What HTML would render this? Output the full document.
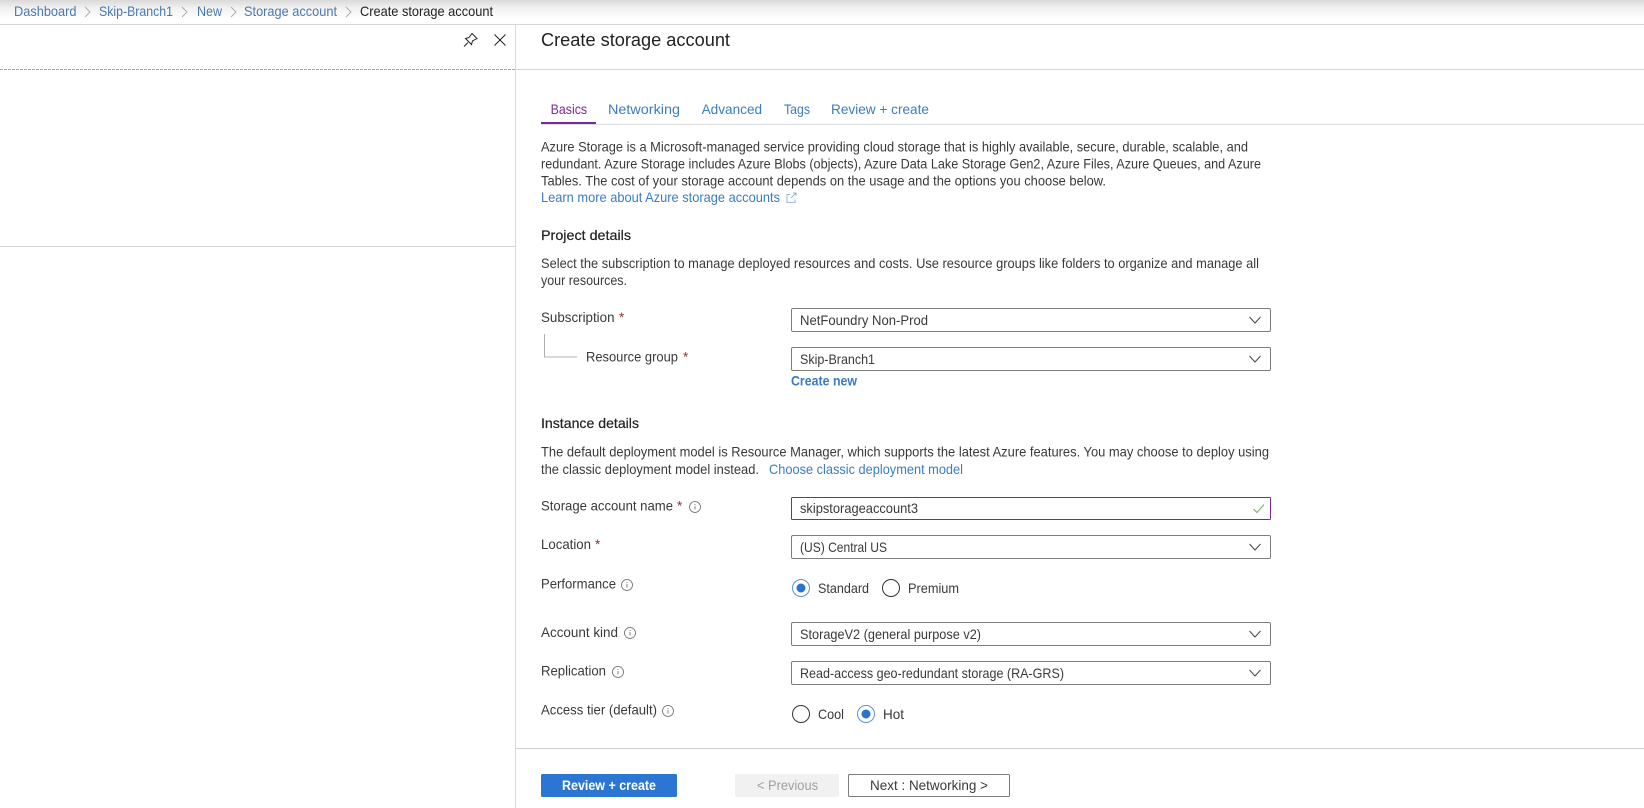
<!DOCTYPE html>
<html>
<head>
<meta charset="utf-8">
<style>
html,body{margin:0;padding:0;background:#fff;width:1644px;height:808px;overflow:hidden}
svg{display:block;filter:blur(.3px)}
text{font-family:"Liberation Sans",sans-serif;font-size:13.6px;fill:#3a3a3a}
.l{fill:#3b7cc2}
.b{fill:#4a78ae}
.s{fill:#8c2f2f}
.box{fill:#fff;stroke:#7d7d7d;stroke-width:1}
.ch{fill:none;stroke:#444;stroke-width:1}
.bc{fill:none;stroke:#aaa;stroke-width:.9}
.i{fill:none;stroke:#666;stroke-width:.8}
</style>
</head>
<body>
<svg width="1644" height="808" viewBox="0 0 1644 808" xmlns="http://www.w3.org/2000/svg">
<defs>
<linearGradient id="g" x1="0" y1="0" x2="0" y2="1"><stop offset="0" stop-color="#d9d9d9"/><stop offset=".35" stop-color="#f2f2f2"/><stop offset=".8" stop-color="#ffffff"/></linearGradient>
</defs>
<rect width="1644" height="808" fill="#fff"/>
<rect width="1644" height="24" fill="url(#g)"/>
<rect y="24" width="1644" height="1" fill="#d4d4d4"/>

<text class="b" x="14" y="16" textLength="62.5" lengthAdjust="spacingAndGlyphs">Dashboard</text>
<path class="bc" d="M85 7l5 5-5 5"/>
<text class="b" x="99" y="16" textLength="74" lengthAdjust="spacingAndGlyphs">Skip-Branch1</text>
<path class="bc" d="M182 7l5 5-5 5"/>
<text class="b" x="197" y="16" textLength="25" lengthAdjust="spacingAndGlyphs">New</text>
<path class="bc" d="M231 7l5 5-5 5"/>
<text class="b" x="244" y="16" textLength="93" lengthAdjust="spacingAndGlyphs">Storage account</text>
<path class="bc" d="M346 7l5 5-5 5"/>
<text x="360" y="16" textLength="133" lengthAdjust="spacingAndGlyphs" style="fill:#222">Create storage account</text>

<rect x="515" y="25" width="1" height="783" fill="#dadada"/>
<path d="M0 69.5H515" stroke="#6dbad6" stroke-width="1" stroke-dasharray="3 1"/>
<rect x="516" y="69" width="1128" height="1" fill="#d4d4d4"/>
<rect x="0" y="246" width="515" height="1" fill="#d4d4d4"/>
<path d="M464 46.5l4-4M472 33.5l5 5-4.5 2.5-1 3.5-6-6 3.5-1z" fill="none" stroke="#222" stroke-width="1"/>
<path d="M494.5 34.5l11 11M505.5 34.5l-11 11" fill="none" stroke="#222" stroke-width="1"/>

<text x="541" y="46" style="font-size:18px;fill:#222" textLength="189" lengthAdjust="spacingAndGlyphs">Create storage account</text>

<text x="550.6" y="114" style="fill:#7a2a96" textLength="36.5" lengthAdjust="spacingAndGlyphs">Basics</text>
<text class="l" x="608" y="114" textLength="72" lengthAdjust="spacingAndGlyphs">Networking</text>
<text class="l" x="701.6" y="114" textLength="60.5" lengthAdjust="spacingAndGlyphs">Advanced</text>
<text class="l" x="784" y="114" textLength="26" lengthAdjust="spacingAndGlyphs">Tags</text>
<text class="l" x="831" y="114" textLength="98" lengthAdjust="spacingAndGlyphs">Review + create</text>
<rect x="541" y="124" width="1103" height="1" fill="#dcdcdc"/>
<rect x="541" y="122" width="55" height="2" fill="#7a2a96"/>

<text x="541" y="151.5" textLength="707" lengthAdjust="spacingAndGlyphs">Azure Storage is a Microsoft-managed service providing cloud storage that is highly available, secure, durable, scalable, and</text>
<text x="541" y="168.5" textLength="720" lengthAdjust="spacingAndGlyphs">redundant. Azure Storage includes Azure Blobs (objects), Azure Data Lake Storage Gen2, Azure Files, Azure Queues, and Azure</text>
<text x="541" y="185.5" textLength="565" lengthAdjust="spacingAndGlyphs">Tables. The cost of your storage account depends on the usage and the options you choose below.</text>
<text class="l" x="541" y="202" textLength="239" lengthAdjust="spacingAndGlyphs">Learn more about Azure storage accounts</text>
<path d="M790 194.5h-3v8h8v-3M791 198l5-5M793 193h3v3" fill="none" stroke="#7ba5d6" stroke-width=".8"/>

<text x="541" y="240" style="fill:#222" stroke="#222" stroke-width=".2" textLength="90" lengthAdjust="spacingAndGlyphs">Project details</text>
<text x="541" y="268" textLength="718" lengthAdjust="spacingAndGlyphs">Select the subscription to manage deployed resources and costs. Use resource groups like folders to organize and manage all</text>
<text x="541" y="285" textLength="86" lengthAdjust="spacingAndGlyphs">your resources.</text>

<text x="541" y="322" textLength="73.5" lengthAdjust="spacingAndGlyphs">Subscription</text>
<text class="s" x="619" y="322">*</text>
<path d="M544.5 334V357H577" fill="none" stroke="#b0b0b0" stroke-width="1"/>
<text x="586" y="361.5" textLength="92" lengthAdjust="spacingAndGlyphs">Resource group</text>
<text class="s" x="683" y="361.5">*</text>

<rect class="box" x="791.5" y="308.5" width="479" height="23" rx="1.5"/>
<text x="800" y="325" textLength="128" lengthAdjust="spacingAndGlyphs">NetFoundry Non-Prod</text>
<path class="ch" d="M1249.5 317l5.5 6 5.5-6"/>

<rect class="box" x="791.5" y="347.5" width="479" height="23" rx="1.5"/>
<text x="800" y="364" textLength="75" lengthAdjust="spacingAndGlyphs">Skip-Branch1</text>
<path class="ch" d="M1249.5 356l5.5 6 5.5-6"/>
<text class="l" x="791" y="385.5" style="font-weight:700" textLength="66" lengthAdjust="spacingAndGlyphs">Create new</text>

<text x="541" y="428" stroke="#222" stroke-width=".2" style="fill:#222" textLength="98" lengthAdjust="spacingAndGlyphs">Instance details</text>
<text x="541" y="456.5" textLength="728" lengthAdjust="spacingAndGlyphs">The default deployment model is Resource Manager, which supports the latest Azure features. You may choose to deploy using</text>
<text x="541" y="474" textLength="218" lengthAdjust="spacingAndGlyphs">the classic deployment model instead.</text>
<text class="l" x="769" y="474" textLength="194" lengthAdjust="spacingAndGlyphs">Choose classic deployment model</text>

<text x="541" y="510.5" textLength="132" lengthAdjust="spacingAndGlyphs">Storage account name</text>
<text class="s" x="677" y="510.5">*</text>
<circle class="i" cx="695" cy="507" r="5.5"/><path class="i" d="M695 506v3.5M695 504v1"/>
<rect x="791.5" y="497.5" width="479" height="22" rx="1" fill="#fff" stroke="#7a2a96" stroke-width="1"/>
<text x="800" y="513" textLength="118" lengthAdjust="spacingAndGlyphs">skipstorageaccount3</text>
<path d="M1253.5 509l3.5 3.5 7-8" fill="none" stroke="#74ab58" stroke-width="1"/>

<text x="541" y="549" textLength="50" lengthAdjust="spacingAndGlyphs">Location</text>
<text class="s" x="595" y="549">*</text>
<rect class="box" x="791.5" y="535.5" width="479" height="23" rx="1.5"/>
<text x="800" y="552" textLength="87" lengthAdjust="spacingAndGlyphs">(US) Central US</text>
<path class="ch" d="M1249.5 544l5.5 6 5.5-6"/>

<text x="541" y="588.5" textLength="75" lengthAdjust="spacingAndGlyphs">Performance</text>
<circle class="i" cx="627" cy="585" r="5.5"/><path class="i" d="M627 584v3.5M627 582v1"/>
<circle cx="801" cy="588" r="8.5" fill="#fff" stroke="#5b93d3" stroke-width="1"/>
<circle cx="801" cy="588" r="4.5" fill="#2a74cc"/>
<text x="818" y="593" textLength="51" lengthAdjust="spacingAndGlyphs">Standard</text>
<circle cx="891" cy="588" r="8.5" fill="#fff" stroke="#333" stroke-width="1"/>
<text x="908" y="593" textLength="51" lengthAdjust="spacingAndGlyphs">Premium</text>

<text x="541" y="637" textLength="77" lengthAdjust="spacingAndGlyphs">Account kind</text>
<circle class="i" cx="630" cy="633" r="5.5"/><path class="i" d="M630 632v3.5M630 630v1"/>
<rect class="box" x="791.5" y="622.5" width="479" height="23" rx="1.5"/>
<text x="800" y="639" textLength="181" lengthAdjust="spacingAndGlyphs">StorageV2 (general purpose v2)</text>
<path class="ch" d="M1249.5 631l5.5 6 5.5-6"/>

<text x="541" y="675.5" textLength="65" lengthAdjust="spacingAndGlyphs">Replication</text>
<circle class="i" cx="618" cy="672" r="5.5"/><path class="i" d="M618 671v3.5M618 669v1"/>
<rect class="box" x="791.5" y="661.5" width="479" height="23" rx="1.5"/>
<text x="800" y="678" textLength="264" lengthAdjust="spacingAndGlyphs">Read-access geo-redundant storage (RA-GRS)</text>
<path class="ch" d="M1249.5 670l5.5 6 5.5-6"/>

<text x="541" y="714.5" textLength="116" lengthAdjust="spacingAndGlyphs">Access tier (default)</text>
<circle class="i" cx="668" cy="711" r="5.5"/><path class="i" d="M668 710v3.5M668 708v1"/>
<circle cx="801" cy="714" r="8.5" fill="#fff" stroke="#333" stroke-width="1"/>
<text x="818" y="719" textLength="26" lengthAdjust="spacingAndGlyphs">Cool</text>
<circle cx="866" cy="714" r="8.5" fill="#fff" stroke="#5b93d3" stroke-width="1"/>
<circle cx="866" cy="714" r="4.5" fill="#2a74cc"/>
<text x="883" y="719" textLength="21" lengthAdjust="spacingAndGlyphs">Hot</text>

<rect x="516" y="748" width="1128" height="1" fill="#d0d0d0"/>

<rect x="541" y="774" width="136" height="23" rx="1.5" fill="#2b76d2"/>
<text x="562" y="790" style="fill:#fff;font-weight:700" textLength="94" lengthAdjust="spacingAndGlyphs">Review + create</text>
<rect x="735" y="774" width="104" height="23" rx="1" fill="#f1f1f1"/>
<text x="757" y="790" style="fill:#a0a0a0" textLength="61" lengthAdjust="spacingAndGlyphs">&lt; Previous</text>
<rect class="box" x="848.5" y="774.5" width="161" height="22" rx="1"/>
<text x="870" y="790" textLength="118" lengthAdjust="spacingAndGlyphs">Next : Networking &gt;</text>
</svg>
</body>
</html>
